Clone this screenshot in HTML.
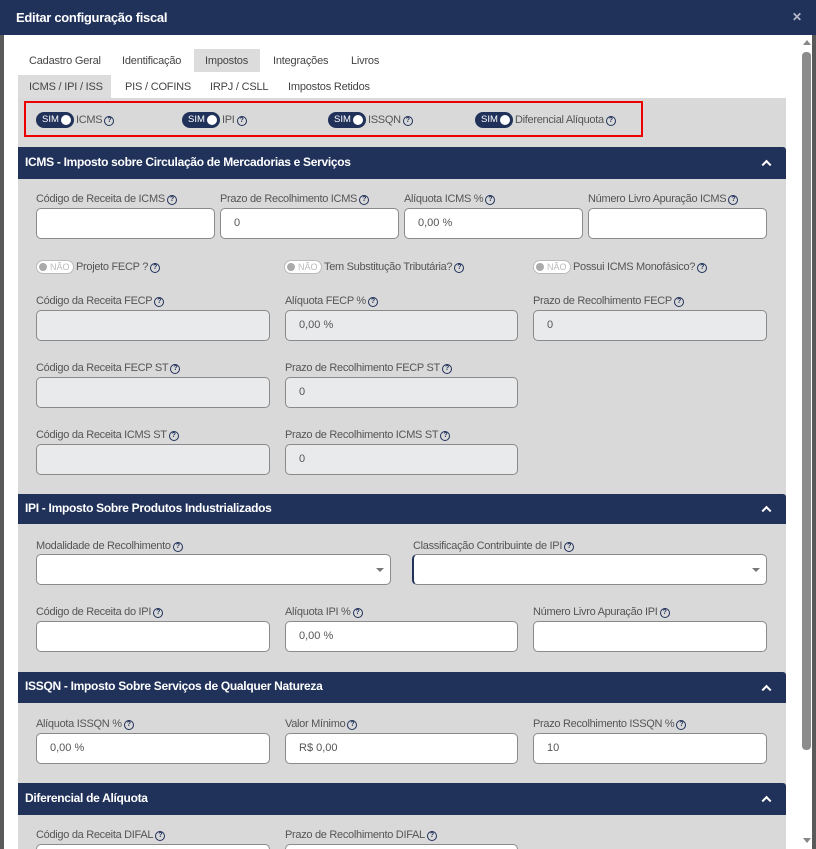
<!DOCTYPE html>
<html style="width:816px;height:849px;overflow:hidden"><head><meta charset="utf-8"><style>
*{box-sizing:border-box;margin:0;padding:0}
body{width:816px;height:849px;overflow:hidden;background:#5a5a5a;font-family:"Liberation Sans",sans-serif;position:relative}
.a{position:absolute}
#modal{position:absolute;left:4px;top:0;width:808px;height:849px;background:#fff}
#hdr{position:absolute;left:0;top:0;width:816px;height:35px;background:#20315a;color:#fff;font-weight:bold;font-size:13px;letter-spacing:-0.3px}
.tab{position:absolute;font-size:11px;color:#444;letter-spacing:-0.2px}
.lbl{position:absolute;font-size:11px;color:#555;letter-spacing:-0.3px;white-space:nowrap;line-height:13px}
.q{display:inline-block;width:10px;height:10px;border:1.2px solid #20315a;border-radius:50%;font-size:7px;line-height:8px;text-align:center;color:#20315a;font-weight:bold;vertical-align:top;margin-top:2px;margin-left:2px}
.in{position:absolute;height:31px;border:1px solid #8a8a8a;border-radius:5px;background:#fff;font-size:11px;color:#555;padding-left:13px;line-height:29px}
.dis{background:#e9eaec}
.sec{position:absolute;left:18px;width:768px;background:#20315a;color:#fff;font-weight:bold;font-size:12px;letter-spacing:-0.3px;padding-left:7px;border-top-right-radius:3px}
.chev{position:absolute;right:16px;top:50%;width:7px;height:7px;border-left:2.5px solid #fff;border-top:2.5px solid #fff;transform:translateY(-25%) rotate(45deg)}
.sim{position:absolute;height:16px;width:38px;border-radius:8px;background:#20315a;color:#fff;font-size:9.5px;line-height:16px;padding-left:6px}
.sim:after{content:"";position:absolute;right:3px;top:3px;width:10px;height:10px;border-radius:50%;background:#fff}
.nao{position:absolute;height:14px;width:38px;border-radius:7px;background:#fff;border:1px solid #bbb;color:#bbb;font-size:9px;line-height:12px;padding-left:13px}
.nao:before{content:"";position:absolute;left:2px;top:2px;width:8px;height:8px;border-radius:50%;background:#aaa}
.arr{position:absolute;right:6px;top:13px;border-left:4px solid transparent;border-right:4px solid transparent;border-top:4px solid #777}
</style></head><body>
<div id="modal"></div>
<div id="hdr"><span class="a" style="left:16px;top:10px">Editar configuração fiscal</span><span class="a" style="left:792px;top:10px;font-size:12px;color:#b8bcc8">✕</span></div>
<div class="a" style="left:798px;top:35px;width:14px;height:814px;background:#fff"></div>
<div class="a" style="left:803px;top:40px;border-left:4px solid transparent;border-right:4px solid transparent;border-bottom:5px solid #888"></div>
<div class="a" style="left:802px;top:52px;width:9px;height:698px;background:#8c8c8c;border-radius:4px"></div>
<div class="a" style="left:803px;top:838px;border-left:4px solid transparent;border-right:4px solid transparent;border-top:5px solid #888"></div>
<div class="a" style="left:194px;top:49px;width:66px;height:23px;background:#dcdcdc"></div>
<span class="tab" style="left:29px;top:55px">Cadastro Geral</span>
<span class="tab" style="left:122px;top:55px">Identificação</span>
<span class="tab" style="left:205px;top:55px">Impostos</span>
<span class="tab" style="left:273px;top:55px">Integrações</span>
<span class="tab" style="left:351px;top:55px">Livros</span>
<div class="a" style="left:18px;top:75px;width:93px;height:23px;background:#dcdcdc"></div>
<span class="tab" style="left:29px;top:81px">ICMS / IPI / ISS</span>
<span class="tab" style="left:125px;top:81px">PIS / COFINS</span>
<span class="tab" style="left:210px;top:81px">IRPJ / CSLL</span>
<span class="tab" style="left:288px;top:81px">Impostos Retidos</span>
<div class="a" style="left:18px;top:98px;width:768px;height:751px;background:#d9d9d9"></div>
<div class="a" style="left:24px;top:101px;width:619px;height:36px;border:2.5px solid #ee0000"></div>
<div class="sim" style="left:36px;top:112px">SIM</div><span class="lbl" style="left:76px;top:114px">ICMS<span class="q">?</span></span>
<div class="sim" style="left:182px;top:112px">SIM</div><span class="lbl" style="left:222px;top:114px">IPI<span class="q">?</span></span>
<div class="sim" style="left:328px;top:112px">SIM</div><span class="lbl" style="left:368px;top:114px">ISSQN<span class="q">?</span></span>
<div class="sim" style="left:475px;top:112px">SIM</div><span class="lbl" style="left:515px;top:114px">Diferencial Alíquota<span class="q">?</span></span>
<div class="sec" style="top:147px;height:32px;line-height:30px">ICMS - Imposto sobre Circulação de Mercadorias e Serviços<i class="chev"></i></div>
<span class="lbl" style="left:36px;top:193px">Código de Receita de ICMS<span class="q">?</span></span>
<span class="lbl" style="left:220px;top:193px">Prazo de Recolhimento ICMS<span class="q">?</span></span>
<span class="lbl" style="left:404px;top:193px">Alíquota ICMS %<span class="q">?</span></span>
<span class="lbl" style="left:588px;top:193px">Número Livro Apuração ICMS<span class="q">?</span></span>
<div class="in" style="left:36px;top:208px;width:179px"></div>
<div class="in" style="left:220px;top:208px;width:179px">0</div>
<div class="in" style="left:404px;top:208px;width:179px">0,00 %</div>
<div class="in" style="left:588px;top:208px;width:179px"></div>
<div class="nao" style="left:36px;top:260px">NÃO</div><span class="lbl" style="left:76px;top:261px">Projeto FECP ?<span class="q">?</span></span>
<div class="nao" style="left:284px;top:260px">NÃO</div><span class="lbl" style="left:324px;top:261px">Tem Substitução Tributária?<span class="q">?</span></span>
<div class="nao" style="left:533px;top:260px">NÃO</div><span class="lbl" style="left:573px;top:261px">Possui ICMS Monofásico?<span class="q">?</span></span>
<span class="lbl" style="left:36px;top:295px">Código da Receita FECP<span class="q">?</span></span>
<span class="lbl" style="left:285px;top:295px">Alíquota FECP %<span class="q">?</span></span>
<span class="lbl" style="left:533px;top:295px">Prazo de Recolhimento FECP<span class="q">?</span></span>
<div class="in dis" style="left:36px;top:310px;width:234px"></div>
<div class="in dis" style="left:285px;top:310px;width:233px">0,00 %</div>
<div class="in dis" style="left:533px;top:310px;width:234px">0</div>
<span class="lbl" style="left:36px;top:362px">Código da Receita FECP ST<span class="q">?</span></span>
<span class="lbl" style="left:285px;top:362px">Prazo de Recolhimento FECP ST<span class="q">?</span></span>
<div class="in dis" style="left:36px;top:377px;width:234px"></div>
<div class="in dis" style="left:285px;top:377px;width:233px">0</div>
<span class="lbl" style="left:36px;top:429px">Código da Receita ICMS ST<span class="q">?</span></span>
<span class="lbl" style="left:285px;top:429px">Prazo de Recolhimento ICMS ST<span class="q">?</span></span>
<div class="in dis" style="left:36px;top:444px;width:234px"></div>
<div class="in dis" style="left:285px;top:444px;width:233px">0</div>
<div class="sec" style="top:494px;height:30px;line-height:29px">IPI - Imposto Sobre Produtos Industrializados<i class="chev"></i></div>
<span class="lbl" style="left:36px;top:540px">Modalidade de Recolhimento<span class="q">?</span></span>
<span class="lbl" style="left:413px;top:540px">Classificação Contribuinte de IPI<span class="q">?</span></span>
<div class="in" style="left:36px;top:554px;width:355px"><i class="arr"></i></div>
<div class="in" style="left:412px;top:554px;width:355px;border-left:2px solid #20315a"><i class="arr"></i></div>
<span class="lbl" style="left:36px;top:606px">Código de Receita do IPI<span class="q">?</span></span>
<span class="lbl" style="left:285px;top:606px">Alíquota IPI %<span class="q">?</span></span>
<span class="lbl" style="left:533px;top:606px">Número Livro Apuração IPI<span class="q">?</span></span>
<div class="in" style="left:36px;top:621px;width:234px"></div>
<div class="in" style="left:285px;top:621px;width:233px">0,00 %</div>
<div class="in" style="left:533px;top:621px;width:234px"></div>
<div class="sec" style="top:672px;height:31px;line-height:29px">ISSQN - Imposto Sobre Serviços de Qualquer Natureza<i class="chev"></i></div>
<span class="lbl" style="left:36px;top:718px">Alíquota ISSQN %<span class="q">?</span></span>
<span class="lbl" style="left:285px;top:718px">Valor Mínimo<span class="q">?</span></span>
<span class="lbl" style="left:533px;top:718px">Prazo Recolhimento ISSQN %<span class="q">?</span></span>
<div class="in" style="left:36px;top:733px;width:234px">0,00 %</div>
<div class="in" style="left:285px;top:733px;width:233px">R$ 0,00</div>
<div class="in" style="left:533px;top:733px;width:234px">10</div>
<div class="sec" style="top:783px;height:32px;line-height:30px">Diferencial de Alíquota<i class="chev"></i></div>
<span class="lbl" style="left:36px;top:829px">Código da Receita DIFAL<span class="q">?</span></span>
<span class="lbl" style="left:285px;top:829px">Prazo de Recolhimento DIFAL<span class="q">?</span></span>
<div class="in" style="left:36px;top:844px;width:234px;height:5px;border-bottom:none;border-radius:5px 5px 0 0"></div>
<div class="in" style="left:285px;top:844px;width:233px;height:5px;border-bottom:none;border-radius:5px 5px 0 0"></div>
</body></html>
